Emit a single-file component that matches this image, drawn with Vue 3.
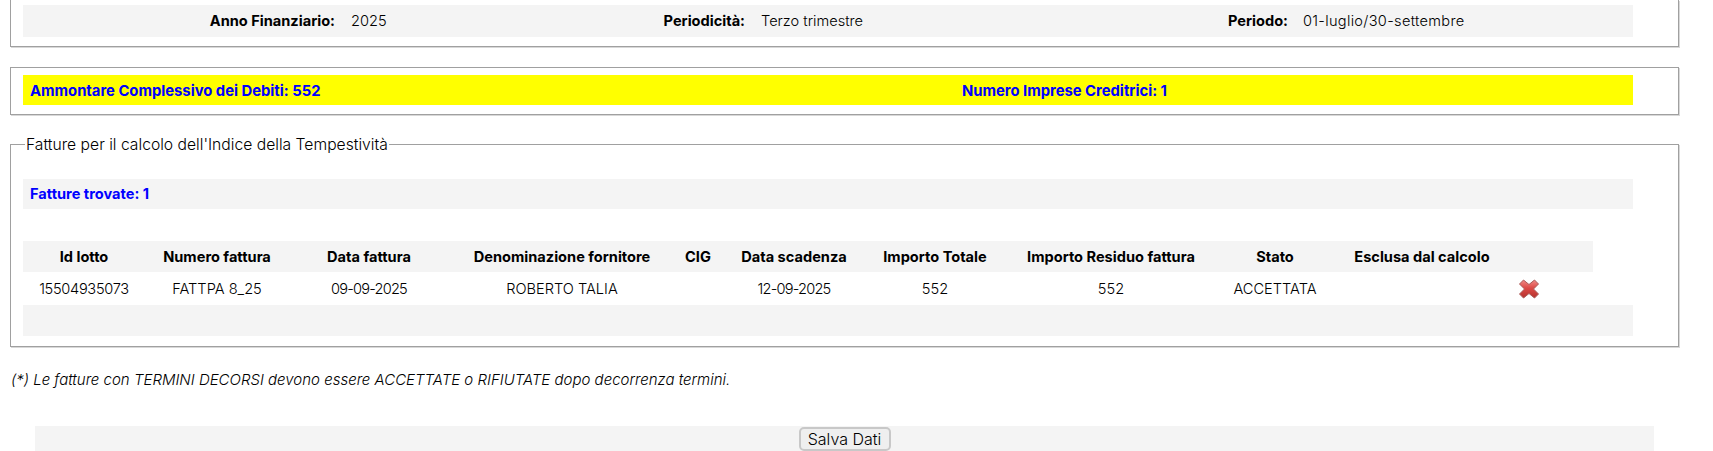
<template>
  <div class="page">
    <fieldset class="box box-top">
      <div class="info-row">
        <div class="lbl">Anno Finanziario:</div>
        <div class="val">2025</div>
        <div class="lbl">Periodicità:</div>
        <div class="val">Terzo trimestre</div>
        <div class="lbl">Periodo:</div>
        <div class="val val-wide">01-luglio/30-settembre</div>
      </div>
    </fieldset>

    <fieldset class="box box-sum">
      <div class="sum-row">
        <div>Ammontare Complessivo dei Debiti: 552</div>
        <div>Numero Imprese Creditrici: 1</div>
      </div>
    </fieldset>

    <fieldset class="box box-list">
      <legend>Fatture per il calcolo dell'Indice della Tempestività</legend>
      <div class="found">Fatture trovate: 1</div>
      <table class="grid">
        <thead>
          <tr>
            <th v-for="col in columns" :key="col.label" :style="{ width: col.width + 'px' }">{{ col.label }}</th>
          </tr>
        </thead>
        <tbody>
          <tr v-for="inv in invoices" :key="inv.lotto">
            <td class="lotto">{{ inv.lotto }}</td>
            <td>{{ inv.numero }}</td>
            <td class="date">{{ inv.data }}</td>
            <td>{{ inv.fornitore }}</td>
            <td>{{ inv.cig }}</td>
            <td class="date">{{ inv.scadenza }}</td>
            <td>{{ inv.totale }}</td>
            <td>{{ inv.residuo }}</td>
            <td>{{ inv.stato }}</td>
            <td></td>
            <td class="cell-icon">
              <svg width="20" height="20" viewBox="0 0 20 20">
                <defs>
                  <linearGradient id="xred" x1="0" y1="0" x2="0" y2="1">
                    <stop offset="0" stop-color="#f08a86" />
                    <stop offset="0.45" stop-color="#dc4a46" />
                    <stop offset="1" stop-color="#b5322e" />
                  </linearGradient>
                </defs>
                <path d="M4.5 1 L10 5.5 L15.5 1 L19.5 5 L14.5 10 L19.5 15 L15.5 19 L10 14.5 L4.5 19 L0.5 15 L5.5 10 L0.5 5 Z" fill="url(#xred)" stroke="#a85a58" stroke-width="1" stroke-linejoin="round" />
              </svg>
            </td>
          </tr>
        </tbody>
      </table>
      <div class="foot-row"></div>
    </fieldset>

    <p class="note">(*) Le fatture con TERMINI DECORSI devono essere ACCETTATE o RIFIUTATE dopo decorrenza termini.</p>

    <div class="actions">
      <button type="button" class="btn">Salva Dati</button>
    </div>
  </div>
</template>

<script setup>
const columns = [
  { label: 'Id lotto', width: 122 },
  { label: 'Numero fattura', width: 144 },
  { label: 'Data fattura', width: 160 },
  { label: 'Denominazione fornitore', width: 226 },
  { label: 'CIG', width: 46 },
  { label: 'Data scadenza', width: 146 },
  { label: 'Importo Totale', width: 136 },
  { label: 'Importo Residuo fattura', width: 216 },
  { label: 'Stato', width: 112 },
  { label: 'Esclusa dal calcolo', width: 182 },
  { label: '', width: 80 }
]

const invoices = [
  {
    lotto: '15504935073',
    numero: 'FATTPA 8_25',
    data: '09-09-2025',
    fornitore: 'ROBERTO TALIA',
    cig: '',
    scadenza: '12-09-2025',
    totale: '552',
    residuo: '552',
    stato: 'ACCETTATA'
  }
]
</script>

<style>
body {
  background: #fff;
  overflow: hidden;
}
</style>

<style scoped>
.page {
  width: 1713px;
  height: 451px;
  overflow: hidden;
  font-family: Inter, "Liberation Sans", sans-serif;
  font-size: 14.6px;
  font-weight: 300;
  color: #000;
}
.box {
  box-sizing: border-box;
  width: 1669px;
  margin: 0 0 0 10px;
  padding: 0 45px 0 12px;
  border: 1px solid #a0a0a0;
  box-shadow: 1px 1px 0 #d8d8d8;
  min-width: 0;
}
.box-top {
  height: 47px;
  border-top: none;
  padding-top: 5px;
}
.info-row {
  display: grid;
  grid-template-columns: 320px 200px 210px 340px 203px 1fr;
  height: 32px;
  align-items: center;
  background: #f4f4f4;
}
.lbl {
  font-weight: 700;
  text-align: right;
  padding-right: 8px;
}
.val {
  padding-left: 8px;
}
.val-wide {
  padding-left: 7px;
  letter-spacing: 0.3px;
}
.box-sum {
  height: 48px;
  margin-top: 20px;
  padding-top: 7px;
}
.sum-row {
  display: grid;
  grid-template-columns: 932px 1fr;
  height: 30px;
  align-items: center;
  padding: 1px 0 0 7px;
  box-sizing: border-box;
  background: #ffff00;
  color: #0000ff;
  font-size: 14.8px;
  font-weight: 700;
}
.box-list {
  height: 211px;
  margin-top: 21px;
}
.box-list legend {
  margin-left: 2px;
  padding: 0 1px;
  font-size: 15.7px;
  line-height: 17px;
}
.found {
  height: 30px;
  margin-top: 26px;
  line-height: 30px;
  padding-left: 7px;
  background: #f4f4f4;
  color: #0000ff;
  font-weight: 700;
}
.grid {
  border-collapse: collapse;
  table-layout: fixed;
  width: 1570px;
  margin-top: 32px;
}
.grid th {
  height: 31px;
  padding: 0;
  background: #f4f4f4;
  font-weight: 700;
  text-align: center;
}
.grid td {
  height: 33px;
  padding: 0;
  text-align: center;
}
.grid .lotto {
  letter-spacing: -0.3px;
}
.grid .date {
  letter-spacing: -0.8px;
}
.grid .cell-icon {
  text-align: left;
  padding-left: 6px;
}
.cell-icon svg {
  display: block;
}
.foot-row {
  height: 31px;
  background: #f4f4f4;
}
.note {
  margin: 23px 0 0 11px;
  height: 20px;
  line-height: 20px;
  font-size: 15px;
  font-style: italic;
}
.actions {
  width: 1619px;
  height: 30px;
  margin: 36px 0 0 35px;
  background: #f4f4f4;
  text-align: center;
}
.btn {
  box-sizing: border-box;
  width: 92px;
  height: 24px;
  margin-top: 1px;
  padding: 0;
  border: 2px solid #c8c8c8;
  border-radius: 5px;
  background: #efefef;
  font: inherit;
  font-size: 16px;
  color: #000;
}
</style>
